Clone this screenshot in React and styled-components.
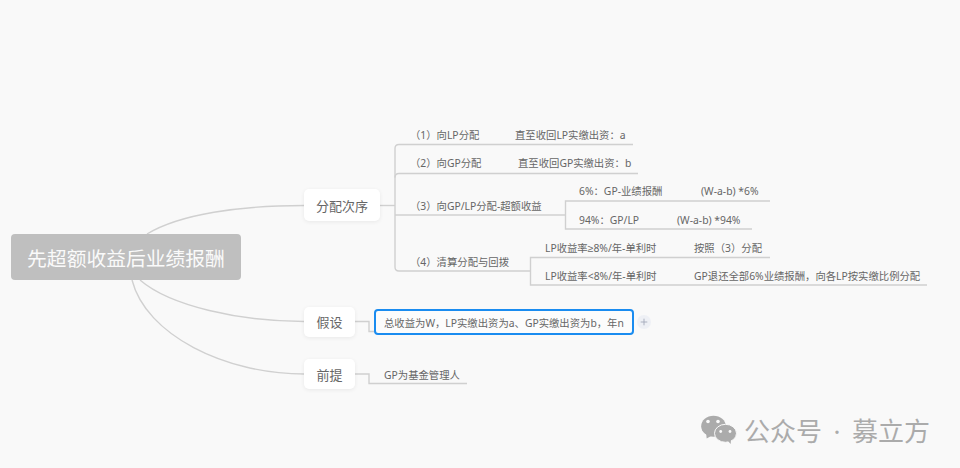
import React from 'react';
import styled, { createGlobalStyle } from 'styled-components';
import { Plus } from 'lucide-react';

const GlobalStyle = createGlobalStyle`
  html, body {
    margin: 0;
    padding: 0;
    background: #f9f9f9;
  }
`;

const Canvas = styled.div`
  position: relative;
  width: 960px;
  height: 468px;
  overflow: hidden;
  background: #f9f9f9;
  font-family: "Noto Sans", "Liberation Sans", "Noto Sans CJK SC", sans-serif;
`;

const Connectors = styled.svg`
  position: absolute;
  left: 0;
  top: 0;
  fill: none;
  stroke: #d0d0d0;
  stroke-width: 1.4;
`;

const RootTopic = styled.div`
  position: absolute;
  left: 11px;
  top: 234px;
  width: 230px;
  height: 46px;
  display: flex;
  align-items: center;
  justify-content: center;
  border-radius: 4px;
  background: #bfbfbf;
  color: #fafafa;
  font-size: 19.8px;
`;

const Topic = styled.div`
  position: absolute;
  left: 304px;
  top: ${p => p.$top}px;
  width: ${p => p.$width}px;
  height: ${p => p.$height}px;
  display: flex;
  align-items: center;
  justify-content: center;
  border-radius: 5px;
  background: #fff;
  box-shadow: 0 1px 4px rgba(0, 0, 0, 0.07);
  color: #666;
  font-size: 13px;
`;

const Label = styled.span`
  position: absolute;
  left: ${p => p.$x}px;
  top: ${p => p.$y - 10}px;
  height: 20px;
  line-height: 20px;
  white-space: nowrap;
  color: #666;
  font-size: 10.35px;
`;

const EditBox = styled.div`
  position: absolute;
  left: 374px;
  top: 309px;
  width: 248px;
  height: 22px;
  display: flex;
  align-items: center;
  padding-left: 8px;
  border: 2px solid #1a8cf0;
  border-radius: 4px;
  background: #fcfcfc;
  color: #666;
  font-size: 10.35px;
  white-space: nowrap;
`;

const AddButton = styled.div`
  position: absolute;
  left: 637px;
  top: 315px;
  width: 14px;
  height: 14px;
  display: flex;
  align-items: center;
  justify-content: center;
  border-radius: 50%;
  background: #eef0f5;
  color: #a3aaba;
`;

const Watermark = styled.div`
  position: absolute;
  left: 701px;
  top: 415px;
  display: flex;
  align-items: center;
  gap: 7px;
  height: 30px;
  color: #ababab;
  font-size: 26px;
  word-spacing: 4.75px;
  white-space: nowrap;
`;

const labels = [
  { x: 410, y: 135, text: '（1）向LP分配' },
  { x: 515, y: 135, text: '直至收回LP实缴出资：a' },
  { x: 410, y: 163, text: '（2）向GP分配' },
  { x: 518, y: 163, text: '直至收回GP实缴出资：b' },
  { x: 410, y: 206, text: '（3）向GP/LP分配-超额收益' },
  { x: 579, y: 191, text: '6%：GP-业绩报酬' },
  { x: 701, y: 191, text: '(W-a-b) *6%' },
  { x: 579, y: 220, text: '94%：GP/LP' },
  { x: 677, y: 220, text: '(W-a-b) *94%' },
  { x: 410, y: 262, text: '（4）清算分配与回拨' },
  { x: 545, y: 248, text: 'LP收益率≥8%/年-单利时' },
  { x: 694, y: 248, text: '按照（3）分配' },
  { x: 545, y: 276, text: 'LP收益率<8%/年-单利时' },
  { x: 694, y: 276, text: 'GP退还全部6%业绩报酬，向各LP按实缴比例分配' },
  { x: 384, y: 375, text: 'GP为基金管理人' },
];

const WeChatIcon = () => (
  <svg width="36" height="30" viewBox="0 0 36 30">
    <ellipse fill="#ababab" cx="12.500" cy="11.200" rx="12.300" ry="10.500" />
    <path fill="#ababab" d="M5 17L5.700 23.500 12 20z" />
    <ellipse fill="#ababab" stroke="#f9f9f9" cx="24.500" cy="18.300" rx="11" ry="9" />
    <path fill="#ababab" d="M26 25L29.700 29 30 23z" />
    <circle fill="#f9f9f9" cx="7" cy="6.500" r="1.800" />
    <circle fill="#f9f9f9" cx="17" cy="6.500" r="1.800" />
    <circle fill="#f9f9f9" cx="19.700" cy="16.500" r="1.400" />
    <circle fill="#f9f9f9" cx="29" cy="16.500" r="1.400" />
  </svg>
);

export default function App() {
  return (
    <Canvas>
      <GlobalStyle />
      <Connectors width="960" height="468">
        <path d="M147 234C180 214 240 205.500 304 205.500" />
        <path d="M140 280C170 306 240 321.500 304 321.500" />
        <path d="M132 280C146 335 225 374 304 374" />
        <path d="M380 205.500H395" />
        <path d="M633 144.500H399Q395 144.500 395 148.500V267Q395 271 399 271H531" />
        <path d="M638 173.500H399Q395 173.500 395 177.500" />
        <path d="M395 215H565" />
        <path d="M770 201H565.500V229H752" />
        <path d="M770 257.500H530.500V285H927" />
        <path d="M355 321.500H369V331.500H375" />
        <path d="M355 374H369V383.500H467" />
      </Connectors>

      <RootTopic>先超额收益后业绩报酬</RootTopic>
      <Topic $top={189} $width={76} $height={32}>分配次序</Topic>
      <Topic $top={306.500} $width={51} $height={30}>假设</Topic>
      <Topic $top={359} $width={51} $height={30}>前提</Topic>

      {labels.map(item => (
        <Label key={item.text} $x={item.x} $y={item.y}>{item.text}</Label>
      ))}

      <EditBox>总收益为W，LP实缴出资为a、GP实缴出资为b，年n</EditBox>
      <AddButton><Plus size={10} strokeWidth={2.2} /></AddButton>

      <Watermark>
        <WeChatIcon />
        <span>公众号 · 募立方</span>
      </Watermark>
    </Canvas>
  );
}
